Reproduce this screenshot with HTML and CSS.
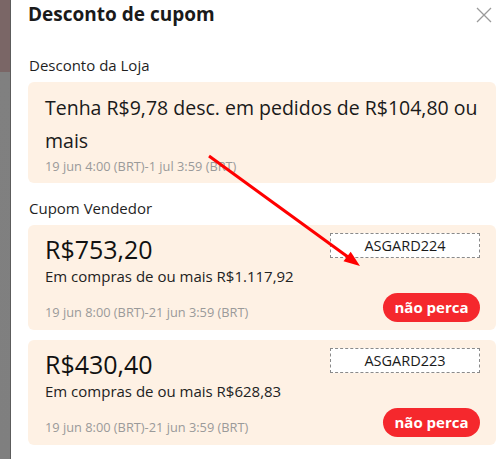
FILE: index.html
```html
<!DOCTYPE html>
<html lang="pt-BR">
<head>
<meta charset="utf-8">
<title>Desconto de cupom</title>
<link rel="stylesheet" href="styles.css">
</head>
<body>
<div class="backdrop"></div>
<div class="modal">
  <div class="header">
    <h1 class="title">Desconto de cupom</h1>
    <svg class="close" width="16" height="16" viewBox="0 0 16 16"><path d="M1 1L15 15M15 1L1 15" stroke="#9a9a9a" stroke-width="1.3" fill="none"/></svg>
  </div>
  <div class="section-label first">Desconto da Loja</div>
  <div class="card store">
    <div class="store-text">Tenha R$9,78 desc. em pedidos de R$104,80 ou mais</div>
    <div class="date">19 jun 4:00 (BRT)-1 jul 3:59 (BRT)</div>
  </div>
  <div class="section-label">Cupom Vendedor</div>
  <div class="card coupon">
    <div class="info">
      <div class="amount">R$753,20</div>
      <div class="cond">Em compras de ou mais R$1.117,92</div>
      <div class="date">19 jun 8:00 (BRT)-21 jun 3:59 (BRT)</div>
    </div>
    <div class="actions">
      <div class="code">ASGARD224</div>
      <div class="btn">não perca</div>
    </div>
  </div>
  <div class="card coupon">
    <div class="info">
      <div class="amount">R$430,40</div>
      <div class="cond">Em compras de ou mais R$628,83</div>
      <div class="date">19 jun 8:00 (BRT)-21 jun 3:59 (BRT)</div>
    </div>
    <div class="actions">
      <div class="code">ASGARD223</div>
      <div class="btn">não perca</div>
    </div>
  </div>
</div>
<svg class="arrow" width="500" height="459" viewBox="0 0 500 459">
  <line x1="209" y1="156" x2="348" y2="257" stroke="#ff0000" stroke-width="3"/>
  <polygon points="360,266 343.5,261.3 350.7,251.7" fill="#ff0000"/>
</svg>
</body>
</html>
```
FILE: styles.css
```css
html, body {
  margin: 0;
  padding: 0;
}
body {
  width: 500px;
  height: 459px;
  overflow: hidden;
  display: flex;
  font-family: "Open Sans", "Liberation Sans", sans-serif;
  color: #222;
  background: #fff;
  position: relative;
}
.backdrop {
  flex: none;
  width: 10px;
  background: linear-gradient(to bottom, #7a6666 0, #7a6666 72px, #808080 72px, #7f7f7f 100%);
}
.modal {
  flex: none;
  width: 468px;
  padding: 0 18px 0 17px;
  border-left: 1px solid #5c5c5c;
  background: #fff;
}
.header {
  display: flex;
  justify-content: space-between;
  align-items: flex-start;
}
.title {
  margin: 0;
  font-size: 19px;
  line-height: 28px;
  font-weight: 700;
  color: #1a1a1a;
}
.close {
  margin-top: 7px;
  margin-right: 4px;
}
.section-label {
  font-size: 15px;
  line-height: 20px;
  color: #1f1f1f;
  margin: 15px 0 7px 1px;
}
.section-label.first {
  margin-top: 27px;
}
.card {
  background: #fef1e4;
  border-radius: 6px;
}
.store {
  padding: 9px 16px 8px 17px;
}
.store-text {
  font-size: 19.5px;
  line-height: 33px;
  color: #1a1a1a;
}
.date {
  font-size: 12.8px;
  line-height: 18px;
  color: #9a9a9a;
}
.coupon {
  display: flex;
  justify-content: space-between;
  padding: 8px 16px 8px 17px;
  height: 89px;
  margin-bottom: 10px;
}
.info {
  display: flex;
  flex-direction: column;
}
.amount {
  font-size: 25px;
  line-height: 32px;
  color: #111;
}
.cond {
  font-size: 15px;
  line-height: 22px;
  color: #222;
}
.coupon .date {
  margin-top: auto;
  line-height: 20px;
}
.actions {
  display: flex;
  flex-direction: column;
  justify-content: space-between;
  align-items: flex-end;
}
.code {
  width: 148px;
  height: 23px;
  border: 1px dashed #8a8a8a;
  background: #fff;
  font-size: 14.5px;
  line-height: 23px;
  text-align: center;
  color: #1a1a1a;
}
.btn {
  width: 97px;
  height: 29px;
  border-radius: 15px;
  background: #f5282d;
  color: #fff;
  font-size: 15px;
  font-weight: 700;
  line-height: 29px;
  text-align: center;
}
.arrow {
  position: absolute;
  left: 0;
  top: 0;
  pointer-events: none;
}
```
